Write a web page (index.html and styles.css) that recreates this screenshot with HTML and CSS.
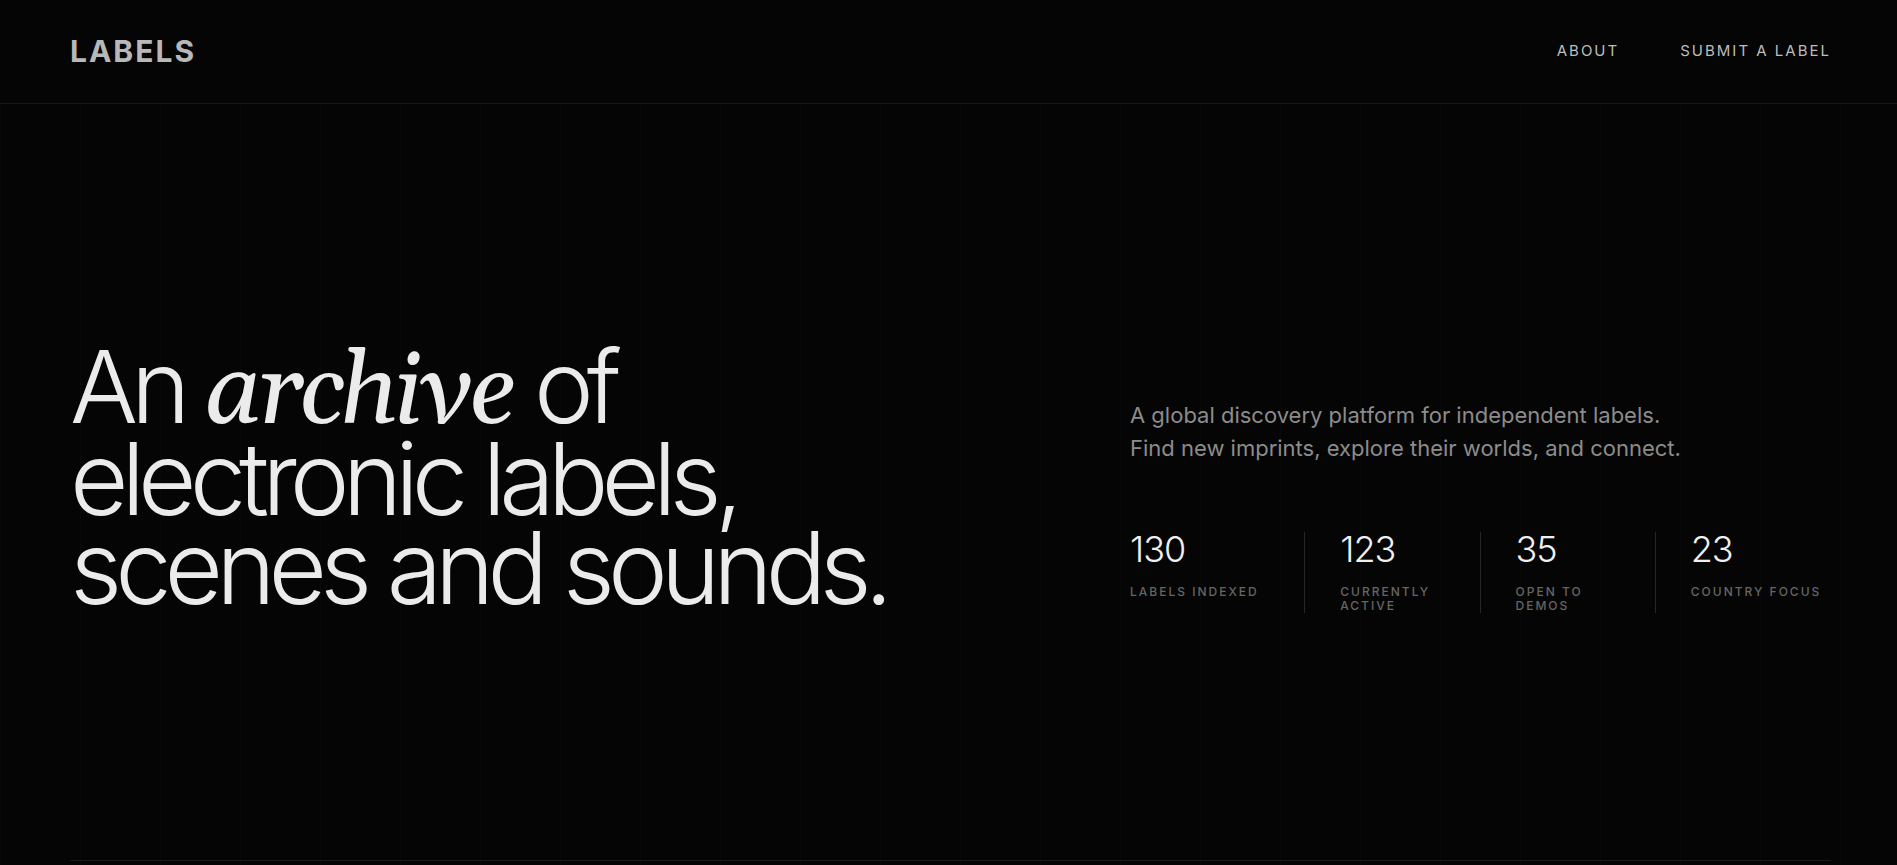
FILE: index.html
```html
<!DOCTYPE html>
<html lang="en">
<head>
<meta charset="utf-8">
<title>Labels</title>
<link rel="stylesheet" href="styles.css">
</head>
<body>
<header class="site-header">
  <a class="logo" href="#">LABELS</a>
  <nav class="nav">
    <a href="#about">About</a>
    <a href="#submit">Submit a label</a>
  </nav>
</header>
<main class="stage">
  <section class="hero">
    <h1 class="title">An <em>archive</em> of<br>electronic labels,<br>scenes and sounds.</h1>
    <div class="intro">
      <p class="lead">A global discovery platform for independent labels.<br>Find new imprints, explore their worlds, and connect.</p>
      <dl class="stats">
        <div class="stat"><dt>Labels indexed</dt><dd>130</dd></div>
        <div class="stat"><dt>Currently active</dt><dd>123</dd></div>
        <div class="stat"><dt>Open to demos</dt><dd>35</dd></div>
        <div class="stat"><dt>Country focus</dt><dd>23</dd></div>
      </dl>
    </div>
  </section>
</main>
</body>
</html>
```
FILE: styles.css
```css
* { box-sizing: border-box; margin: 0; padding: 0; }

body {
  min-height: 100vh;
  display: flex;
  flex-direction: column;
  background: #050505;
  color: #ebebeb;
  font-family: Inter, "Liberation Sans", sans-serif;
}

a { color: inherit; text-decoration: none; }

.site-header {
  display: flex;
  align-items: center;
  justify-content: space-between;
  height: 104px;
  padding: 0 66px 2px 70px;
  border-bottom: 1px solid #161616;
}

.logo {
  color: #b8b8b8;
  font-size: 30px;
  font-weight: 700;
  letter-spacing: 2px;
}

.nav {
  display: flex;
  gap: 61px;
  color: #bdbdbd;
  font-size: 15px;
  font-weight: 400;
  letter-spacing: 2px;
  text-transform: uppercase;
}

.stage {
  flex: 1;
  display: flex;
  padding: 0 66px 4px 70px;
  background: repeating-linear-gradient(to right, #090909 0 1px, transparent 1px 80px);
}

.hero {
  flex: 1;
  display: grid;
  grid-template-columns: 1060fr 701fr;
  align-content: center;
  align-items: end;
  padding-bottom: 9px;
  border-bottom: 1px solid #1a1a1a;
}

.title {
  padding-bottom: 1px;
  font-size: 101px;
  font-weight: 300;
  line-height: 89px;
  letter-spacing: -7px;
}

.title em {
  font-family: Georgia, Gelasio, "Liberation Serif", serif;
  font-size: 100px;
  font-weight: 400;
  line-height: 80px;
  letter-spacing: -4px;
}

.lead {
  color: #8c8c8c;
  font-size: 22px;
  font-weight: 400;
  line-height: 33px;
}

.stats {
  display: grid;
  grid-template-columns: repeat(4, 1fr);
  margin-top: 67px;
}

.stat {
  display: flex;
  flex-direction: column-reverse;
  justify-content: flex-end;
  gap: 19px;
  padding: 0 35px;
  border-right: 1px solid #262626;
}

.stat:first-child { padding-left: 0; }
.stat:last-child { padding-right: 0; border-right: 0; }

.stat dd {
  color: #f0f0f0;
  font-size: 36px;
  font-weight: 300;
  line-height: 34px;
  letter-spacing: -1px;
}

.stat dt {
  color: #666;
  font-size: 12px;
  font-weight: 500;
  line-height: 14px;
  letter-spacing: 2px;
  text-transform: uppercase;
}
```
